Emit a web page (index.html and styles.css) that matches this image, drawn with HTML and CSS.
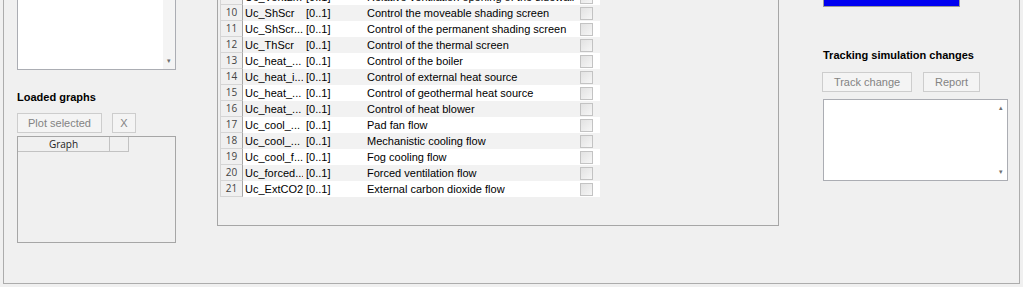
FILE: index.html
```html
<!DOCTYPE html>
<html lang="en">
<head>
  <meta charset="UTF-8" />
  <title>Control inputs</title>
  <link rel="stylesheet" href="styles.css">
</head>
<body>
  <div class="window">

    <div class="col-left">
      <div class="listbox">
        <div class="vscroll"><span class="arr down">&#9662;</span></div>
      </div>
      <h4 class="label">Loaded graphs</h4>
      <div class="btn-row">
        <button class="btn" style="width:85px" disabled>Plot selected</button>
        <button class="btn" style="width:24px" disabled>X</button>
      </div>
      <div class="graphs">
        <div class="ghead">
          <div class="gcell first">Graph</div>
          <div class="gcell second"></div>
        </div>
      </div>
    </div>

    <div class="col-mid">
      <div class="group">
        <table class="inputs">
          <colgroup>
            <col style="width:23px"><col style="width:60px"><col style="width:61px"><col style="width:211px"><col style="width:25px">
          </colgroup>
          <tr><td class="num">9</td><td>Uc_VentLm</td><td>[0..1]</td><td>Relative ventilation opening of the sidewall</td><td class="chk"><span class="box"></span></td></tr>
          <tr><td class="num">10</td><td>Uc_ShScr</td><td>[0..1]</td><td>Control the moveable shading screen</td><td class="chk"><span class="box"></span></td></tr>
          <tr><td class="num">11</td><td>Uc_ShScr...</td><td>[0..1]</td><td>Control of the permanent shading screen</td><td class="chk"><span class="box"></span></td></tr>
          <tr><td class="num">12</td><td>Uc_ThScr</td><td>[0..1]</td><td>Control of the thermal screen</td><td class="chk"><span class="box"></span></td></tr>
          <tr><td class="num">13</td><td>Uc_heat_...</td><td>[0..1]</td><td>Control of the boiler</td><td class="chk"><span class="box"></span></td></tr>
          <tr><td class="num">14</td><td>Uc_heat_i...</td><td>[0..1]</td><td>Control of external heat source</td><td class="chk"><span class="box"></span></td></tr>
          <tr><td class="num">15</td><td>Uc_heat_...</td><td>[0..1]</td><td>Control of geothermal heat source</td><td class="chk"><span class="box"></span></td></tr>
          <tr><td class="num">16</td><td>Uc_heat_...</td><td>[0..1]</td><td>Control of heat blower</td><td class="chk"><span class="box"></span></td></tr>
          <tr><td class="num">17</td><td>Uc_cool_...</td><td>[0..1]</td><td>Pad fan flow</td><td class="chk"><span class="box"></span></td></tr>
          <tr><td class="num">18</td><td>Uc_cool_...</td><td>[0..1]</td><td>Mechanistic cooling flow</td><td class="chk"><span class="box"></span></td></tr>
          <tr><td class="num">19</td><td>Uc_cool_f...</td><td>[0..1]</td><td>Fog cooling flow</td><td class="chk"><span class="box"></span></td></tr>
          <tr><td class="num">20</td><td>Uc_forced...</td><td>[0..1]</td><td>Forced ventilation flow</td><td class="chk"><span class="box"></span></td></tr>
          <tr><td class="num">21</td><td>Uc_ExtCO2</td><td>[0..1]</td><td>External carbon dioxide flow</td><td class="chk"><span class="box"></span></td></tr>
        </table>
      </div>
    </div>

    <div class="col-right">
      <div class="bluebar"></div>
      <h4 class="label track">Tracking simulation changes</h4>
      <div class="btn-row">
        <button class="btn" style="width:90px" disabled>Track change</button>
        <button class="btn" style="width:57px" disabled>Report</button>
      </div>
      <div class="notes">
        <div class="vscroll"><span class="arr">&#9652;</span><span class="arr">&#9662;</span></div>
      </div>
    </div>

  </div>
</body>
</html>
```

FILE: styles.css
```css
body {
  margin: 0;
  background: #f0f0f0;
  font-family: 'Liberation Sans', Arial, sans-serif;
  font-size: 12px;
  color: #000;
}

.window {
  margin-left: 3px;
  width: 1015px;
  height: 283px;
  border: 1px solid #acacac;
  border-top: none;
  display: flex;
}

.col-left {
  width: 159px;
  margin-left: 13px;
}

.listbox {
  height: 69px;
  background: #fff;
  border: 1px solid #abadb3;
  border-top: none;
  display: flex;
  justify-content: flex-end;
}

.vscroll {
  width: 12px;
  display: flex;
  flex-direction: column;
  justify-content: space-between;
  align-items: center;
  color: #707070;
  font-size: 7px;
  padding: 4px 0;
}

.listbox .vscroll {
  justify-content: flex-end;
  background: #f4f4f4;
}

.label {
  margin: 21px 0 0;
  font-size: 11px;
  font-weight: bold;
  line-height: 13px;
}

.btn-row {
  display: flex;
  gap: 10px;
  margin-top: 9px;
}

.btn {
  height: 20px;
  padding: 0;
  border: 1px solid #cdcdcd;
  background: #f4f4f4;
  color: #838383;
  font-family: 'Liberation Sans', Arial, sans-serif;
  font-size: 11px;
}

.graphs {
  margin-top: 3px;
  height: 105px;
  border: 1px solid #a6a6a6;
}

.ghead {
  display: flex;
  height: 15px;
}

.gcell {
  border-right: 1px solid #c2c2c2;
  border-bottom: 1px solid #c2c2c2;
  font-family: 'Open Sans', sans-serif;
  font-size: 10px;
  line-height: 15px;
  text-align: center;
  color: #222;
}

.gcell.first { width: 91px; }
.gcell.second { width: 18px; }

.col-mid {
  margin-left: 41px;
  width: 562px;
}

.group {
  height: 225px;
  border: 1px solid #a6a6a6;
  border-top: none;
  overflow: hidden;
}

.inputs {
  table-layout: fixed;
  border-collapse: separate;
  border-spacing: 0;
  margin: -11px 0 0 2px;
  width: 380px;
  font-size: 11px;
}

.inputs tr {
  background: #fff;
}

.inputs tr:nth-child(even) {
  background: #f2f2f2;
}

.inputs td {
  padding: 0 0 0 2px;
  line-height: 16px;
  white-space: nowrap;
  overflow: hidden;
}

.inputs td:nth-child(3),
.inputs td:nth-child(4) {
  padding-left: 3px;
}

.inputs td.num {
  padding: 0;
  line-height: 15px;
  text-align: center;
  background: #f0f0f0;
  border-left: 1px solid #d5d5d5;
  border-right: 1px solid #a6a6a6;
  border-bottom: 1px solid #d5d5d5;
  font-family: 'Open Sans', sans-serif;
  font-size: 10px;
  color: #444;
}

.inputs td.chk {
  padding: 0;
}

.box {
  display: block;
  width: 11px;
  height: 11px;
  margin-left: 5px;
  border: 1px solid #c3c3c3;
  background: linear-gradient(135deg, #e2e2e2, #f6f6f6);
}

.col-right {
  margin-left: 44px;
  width: 185px;
}

.bluebar {
  width: 135px;
  height: 6px;
  background: #0000f0;
  border: 1px solid #9a9a9a;
  border-top: none;
}

.label.track {
  margin-top: 42px;
}

.col-right .btn-row {
  gap: 11px;
  margin-top: 10px;
  margin-left: -1px;
}

.notes {
  margin-top: 7px;
  height: 80px;
  background: #fff;
  border: 1px solid #abadb3;
  display: flex;
  justify-content: flex-end;
}
```
